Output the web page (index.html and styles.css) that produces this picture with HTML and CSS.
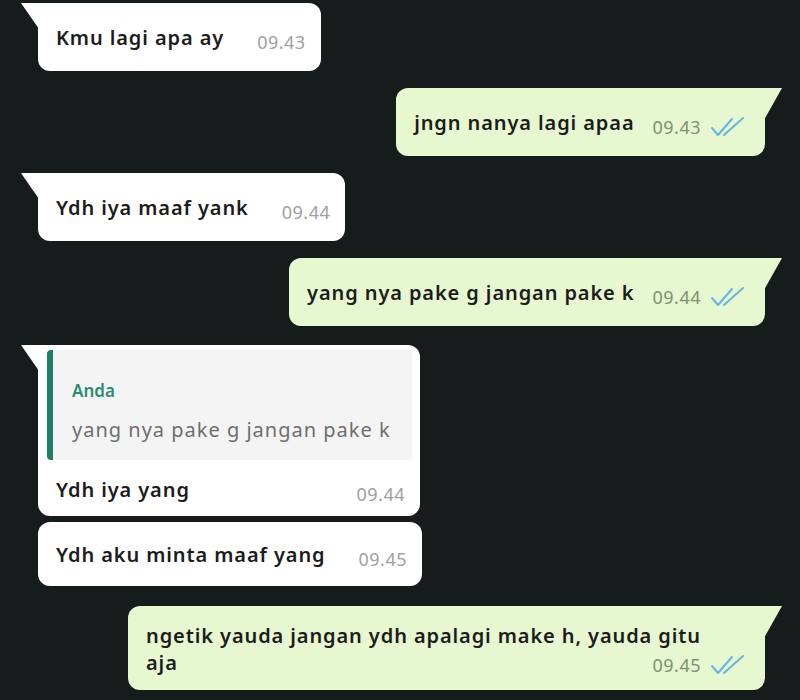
FILE: index.html
```html
<!DOCTYPE html>
<html lang="id">
<head>
<meta charset="utf-8">
<title>Chat</title>
<link rel="stylesheet" href="styles.css">
</head>
<body>
<div class="chat">
  <div class="bubble in tail">
    <span class="text">Kmu lagi apa ay</span>
    <span class="meta"><span class="time">09.43</span></span>
  </div>
  <div class="bubble out tail">
    <span class="text">jngn nanya lagi apaa</span>
    <span class="meta"><span class="time">09.43</span><svg class="ticks" viewBox="0 0 38 22"><path d="M2 12 L8 19 L22 3"/><path d="M14 19 L33 2"/></svg></span>
  </div>
  <div class="bubble in tail">
    <span class="text">Ydh iya maaf yank</span>
    <span class="meta"><span class="time">09.44</span></span>
  </div>
  <div class="bubble out tail">
    <span class="text">yang nya pake g jangan pake k</span>
    <span class="meta"><span class="time">09.44</span><svg class="ticks" viewBox="0 0 38 22"><path d="M2 12 L8 19 L22 3"/><path d="M14 19 L33 2"/></svg></span>
  </div>
  <div class="bubble in tail reply">
    <div class="quote">
      <div class="quote-name">Anda</div>
      <div class="quote-text">yang nya pake g jangan pake k</div>
    </div>
    <div class="row">
      <span class="text">Ydh iya yang</span>
      <span class="meta"><span class="time">09.44</span></span>
    </div>
  </div>
  <div class="bubble in cont">
    <span class="text">Ydh aku minta maaf yang</span>
    <span class="meta"><span class="time">09.45</span></span>
  </div>
  <div class="bubble out tail multi">
    <span class="text">ngetik yauda jangan ydh apalagi make h, yauda gitu aja</span><span class="meta"><span class="time">09.45</span><svg class="ticks" viewBox="0 0 38 22"><path d="M2 12 L8 19 L22 3"/><path d="M14 19 L33 2"/></svg></span>
  </div>
</div>
</body>
</html>
```
FILE: styles.css
```css
html, body {
  margin: 0;
  padding: 0;
  background: #161b1b;
}

body {
  width: 800px;
  height: 700px;
  overflow: hidden;
  font-family: "Noto Sans", "DejaVu Sans", sans-serif;
}

.chat {
  display: flex;
  flex-direction: column;
  padding: 3px 35px 0 38px;
}

.bubble {
  position: relative;
  display: flex;
  align-items: flex-end;
  gap: 33px;
  border-radius: 12px;
  padding: 21px 15px 20px 18px;
  color: #1c1c1c;
  box-sizing: border-box;
}

.bubble.in {
  align-self: flex-start;
  background: #ffffff;
}

.bubble.out {
  align-self: flex-end;
  background: #e7f7d0;
  gap: 18px;
  padding-right: 17px;
}

.bubble + .bubble { margin-top: 17px; }
.bubble.reply { margin-top: 19px; }
.bubble.cont { margin-top: 6px; padding-top: 19px; padding-bottom: 18px; }
.bubble.multi { margin-top: 20px; }

.bubble.in.tail { border-top-left-radius: 0; }
.bubble.out.tail { border-top-right-radius: 0; }

.bubble.tail::before {
  content: "";
  position: absolute;
  top: 0;
  width: 18px;
  height: 26px;
  background: inherit;
}

.bubble.in.tail::before {
  left: -17px;
  clip-path: polygon(0 0, 100% 0, 100% 100%);
}

.bubble.out.tail::before {
  right: -17px;
  height: 32px;
  clip-path: polygon(0 0, 100% 0, 0 100%);
}

.text {
  font-size: 20px;
  line-height: 27px;
  font-weight: 600;
  letter-spacing: 0.9px;
}

.meta {
  display: flex;
  align-items: center;
  gap: 9px;
  margin-bottom: -3px;
}

.time {
  font-size: 18px;
  line-height: 24px;
  color: #a0a0a0;
  letter-spacing: 0.5px;
}

.out .time { color: #7e9172; }

.ticks {
  width: 38px;
  height: 22px;
  fill: none;
  stroke: #62b6df;
  stroke-width: 2;
  stroke-linecap: round;
  stroke-linejoin: round;
}

/* reply bubble */
.bubble.reply {
  flex-direction: column;
  align-items: stretch;
  gap: 0;
  padding: 5px 15px 13px 9px;
  width: 382px;
}

.quote {
  background: #f4f4f4;
  border-left: 6px solid #1c7f69;
  border-radius: 4px;
  padding: 30px 8px 17px 19px;
  margin-right: -7px;
}

.quote-name {
  font-size: 17px;
  line-height: 22px;
  font-weight: 600;
  color: #2a8c72;
}

.quote-text {
  font-size: 20px;
  line-height: 26px;
  color: #6e6e6e;
  letter-spacing: 1px;
  margin-top: 15px;
  white-space: nowrap;
}

.row {
  display: flex;
  justify-content: space-between;
  align-items: flex-end;
  padding-left: 9px;
  margin-top: 16px;
}

/* multiline bubble */
.bubble.multi {
  display: flow-root;
  width: 637px;
  padding: 16px 60px 12px 18px;
}

.multi .meta {
  float: right;
  margin: 2px -43px 0 20px;
  height: 27px;
}
```
